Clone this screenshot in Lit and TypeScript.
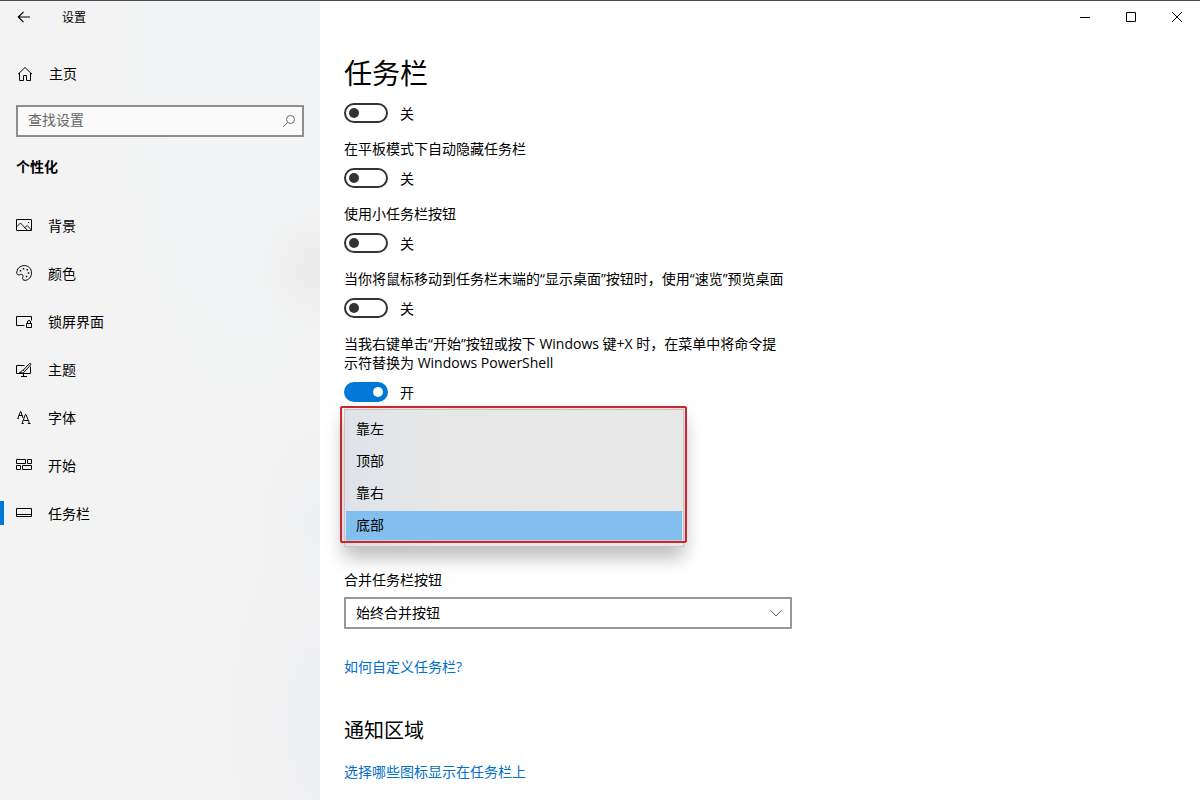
import { LitElement, html, css, svg } from "lit";
import { customElement, state } from "lit/decorators.js";
import { classMap } from "lit/directives/class-map.js";

const icons: Record<string, unknown> = {
  background: svg`<path d="M.5 2.500h15v11H.5z"/><path d="M1 9.500l3.500-3.500 6.500 7M8.500 10.800l2.800-2.300 4.200 4.500" stroke-width=".9"/><path d="M12 5.500h1"/>`,
  colors: svg`<path d="M.8 8.300C.6 3.800 4 .6 8.300.6c4.200 0 7.200 3 7.200 7.200 0 4.400-3 7.500-6.500 7.500-2 0-2.600-1.200-2.300-2.600.4-1.700.5-2.900-.7-3.300-1.100-.4-1.900.5-2.900.5-1.300 0-2.200-.6-2.300-1.600z"/><path d="M3.700 5.700h1.500M6.800 3.700h1.500M10.500 4.700h1.500M11.800 8h1.500M9.800 11.500h1.500" stroke-width="1.500"/>`,
  lock: svg`<path d="M8.500 12.500H.5v-9h15v4M10.500 10.500h5v4h-5zM11.500 10.500V9a1.500 1.500 0 0 1 3 0v1.500"/>`,
  themes: svg`<path d="M8.500 4.500h-8v8h14v-7M5 15.500h6M7.500 13v2.500"/><path d="M7.200 9.200l6.200-6.500c.9-.8 2 .2 1.200 1.200L8.600 10.500zM7.200 9.200c-1.700-.1-1.800 1.900-3.700 2.200 1.800.8 4.500.7 5.100-.9"/>`,
  fonts: svg`<path d="M2 9L4.500 2.500h.3L7 9M2.800 6.500h3.600M1.300 9.500h1.500M6.300 14L9.300 5.500h.7l3.300 8.500M7.500 11.500h4.600M5.500 14.500h2.200M11.800 14.500h2.700"/>`,
  start: svg`<path d="M.5 2.500h9v4h-9zM11.500 2.500h4v4h-4zM.5 8.500h4v4h-4zM6.500 8.500h9v4h-9z"/>`,
  taskbar: svg`<path d="M.5 3.500h15v8H.5zM.5 9.500h15"/>`,
};

const navItems = [
  { icon: "background", label: "背景" },
  { icon: "colors", label: "颜色" },
  { icon: "lock", label: "锁屏界面" },
  { icon: "themes", label: "主题" },
  { icon: "fonts", label: "字体" },
  { icon: "start", label: "开始" },
  { icon: "taskbar", label: "任务栏" },
];

@customElement("app-root")
export class AppRoot extends LitElement {
  @state() private active = "taskbar";

  @state() private toggles = [
    { label: "", on: false },
    { label: "在平板模式下自动隐藏任务栏", on: false },
    { label: "使用小任务栏按钮", on: false },
    { label: "当你将鼠标移动到任务栏末端的“显示桌面”按钮时，使用“速览”预览桌面", on: false },
    { label: "当我右键单击“开始”按钮或按下 Windows 键+X 时，在菜单中将命令提示符替换为 Windows PowerShell", on: true },
  ];

  static styles = css`
    :host {
      display: block;
      font: 14px/20px "Open Sans", "Noto Sans CJK SC", sans-serif;
      color: #000;
    }
    * { box-sizing: border-box; }
    button, input, select { font: inherit; color: inherit; }
    svg {
      display: block;
      flex: none;
      fill: none;
      stroke: currentColor;
    }
    .window {
      display: flex;
      min-height: 100vh;
      background: #fff;
      border-top: 1px solid #4a494b;
    }
    .sidebar {
      flex: none;
      width: 320px;
      background:
        radial-gradient(circle at 320px 268px, #eae9e8 0, #eae9e800 60px),
        radial-gradient(ellipse at 320px 520px, #eeeff1 0, #eeeff100 60px),
        radial-gradient(ellipse at 320px 720px, #edeef0 0, #edeef000 90px),
        radial-gradient(ellipse at 240px 0, #f2f4f6 0, #f2f4f600 170px),
        #f3f3f3;
    }
    .titlebar {
      display: flex;
      align-items: center;
      height: 32px;
      font-size: 12px;
    }
    .titlebar-text { padding-top: 2px; }
    .back, .control {
      display: grid;
      place-items: center;
      height: 32px;
      padding: 0;
      border: 0;
      background: none;
    }
    .back { width: 48px; margin-right: 14px; }
    .control { width: 46px; }
    .home {
      display: flex;
      align-items: center;
      gap: 16px;
      height: 40px;
      margin-top: 21px;
      padding-left: 17px;
      color: inherit;
      text-decoration: none;
    }
    .search {
      display: flex;
      align-items: center;
      height: 32px;
      margin: 11px 16px 0;
      padding: 0 6px 0 10px;
      border: 2px solid #8e8e8e;
      background: #fafafa;
      color: #666;
    }
    .search-input {
      flex: 1;
      min-width: 0;
      padding: 0 0 2px;
      border: 0;
      outline: 0;
      background: none;
    }
    .search-input::placeholder { color: #666; opacity: 1; }
    .category {
      margin: 20px 16px 24px;
      font-size: 14px;
      line-height: 20px;
      font-weight: 700;
    }
    .nav { display: flex; flex-direction: column; }
    .nav-item {
      display: flex;
      align-items: center;
      height: 48px;
      color: inherit;
      text-decoration: none;
    }
    .nav-item::before {
      content: "";
      width: 4px;
      height: 24px;
      margin-right: 12px;
    }
    .nav-item.active::before { background: #0078d7; }
    .nav-label { margin-left: 16px; padding-top: 2px; }

    .main { flex: 1; min-width: 0; }
    .controls { display: flex; justify-content: flex-end; }
    .content { max-width: 496px; padding: 0 24px 16px; }
    .title {
      margin: 20px 0 10px;
      font-size: 28px;
      line-height: 40px;
      font-weight: 400;
    }
    .settings { display: flex; flex-direction: column; gap: 16px; }
    .setting { display: flex; flex-direction: column; gap: 10px; }
    .setting-label { max-width: 444px; line-height: 19px; }
    .toggle-row { display: flex; align-items: center; gap: 12px; height: 20px; }
    .toggle-state { padding-top: 2px; }
    .toggle {
      appearance: none;
      flex: none;
      width: 44px;
      height: 20px;
      margin: 0;
      padding: 3px;
      border: 2px solid #333;
      border-radius: 10px;
    }
    .toggle::before {
      content: "";
      display: block;
      width: 10px;
      height: 10px;
      border-radius: 50%;
      background: #333;
    }
    .toggle:checked { border-color: #0078d7; background: #0078d7; }
    .toggle:checked::before { margin-left: auto; background: #fff; }

    .position { position: relative; height: 168px; }
    .popup {
      position: absolute;
      top: 7px;
      left: 0;
      width: 340px;
      border: 1px solid #c6c6c8;
      padding: 5px 1px 3px;
      background: linear-gradient(90deg, #dfe3e9, #e7e7e7 28%, #e8e8e8);
      box-shadow: 0 10px 18px rgba(0, 0, 0, 0.28);
    }
    .options {
      appearance: none;
      display: block;
      width: 100%;
      height: 128px;
      padding: 0;
      border: 0;
      outline: 0;
      background: none;
      overflow: hidden;
    }
    .option { height: 32px; padding: 3px 10px 0; }
    .option:checked {
      color: #000;
      background: linear-gradient(#82beee, #82beee);
    }
    .marker {
      position: absolute;
      inset: -4px -4px 3px -5px;
      border: 2px solid #c8282f;
      border-radius: 2px;
      box-shadow: inset 0 0 0 1px rgba(255, 205, 205, 0.6);
      pointer-events: none;
    }
    .combo-label { display: block; margin-bottom: 7px; }
    .combo { display: grid; align-items: center; }
    .combo > * { grid-area: 1 / 1; }
    .combo-select {
      appearance: none;
      width: 100%;
      height: 32px;
      padding: 0 34px 0 10px;
      border: 2px solid #999;
      border-radius: 0;
      background: #fff;
    }
    .chevron { justify-self: end; margin-right: 9px; color: #666; pointer-events: none; }
    .link { display: block; width: fit-content; color: #0070c9; text-decoration: none; }
    .help { margin-top: 28px; }
    .section {
      margin: 40px 0 17px;
      font-size: 20px;
      line-height: 28px;
      font-weight: 400;
    }
  `;

  private flip(index: number) {
    this.toggles = this.toggles.map((t, i) => (i === index ? { ...t, on: !t.on } : t));
  }

  private renderToggle(item: { label: string; on: boolean }, index: number) {
    const id = `toggle-${index}`;
    return html`
      <div class="setting">
        ${item.label ? html`<label class="setting-label" for=${id}>${item.label}</label>` : ""}
        <div class="toggle-row">
          <input class="toggle" type="checkbox" role="switch" id=${id} .checked=${item.on} @change=${() => this.flip(index)} />
          <label class="toggle-state" for=${id}>${item.on ? "开" : "关"}</label>
        </div>
      </div>
    `;
  }

  render() {
    return html`
      <div class="window">
        <aside class="sidebar">
          <header class="titlebar">
            <button class="back" type="button" aria-label="返回">
              <svg width="14" height="12" viewBox="0 0 14 12"><path d="M13 6H1.500M6.500.8L1.300 6l5.200 5.200" stroke-width="1.200" /></svg>
            </button>
            <span class="titlebar-text">设置</span>
          </header>
          <a class="home" href="#">
            <svg width="16" height="16" viewBox="0 0 16 16"><path d="M1 8.200L8 1.500l7 6.700M2.500 7v7.500h4v-5h3v5h4V7" /></svg>
            <span>主页</span>
          </a>
          <label class="search">
            <input class="search-input" type="text" placeholder="查找设置" />
            <svg width="14" height="14" viewBox="0 0 14 14"><circle cx="8.500" cy="5.500" r="4" /><path d="M5.600 8.400L1 13" /></svg>
          </label>
          <h2 class="category">个性化</h2>
          <nav class="nav">
            ${navItems.map(
              (item) => html`
                <a
                  class=${classMap({ "nav-item": true, active: item.icon === this.active })}
                  href="#"
                  @click=${() => (this.active = item.icon)}
                >
                  <svg width="16" height="16" viewBox="0 0 16 16">${icons[item.icon]}</svg>
                  <span class="nav-label">${item.label}</span>
                </a>
              `
            )}
          </nav>
        </aside>

        <main class="main">
          <div class="controls">
            <button class="control" type="button" aria-label="最小化">
              <svg width="10" height="10" viewBox="0 0 10 10"><path d="M0 5.500h10" /></svg>
            </button>
            <button class="control" type="button" aria-label="最大化">
              <svg width="10" height="10" viewBox="0 0 10 10"><path d="M.5.5h9v9h-9z" /></svg>
            </button>
            <button class="control" type="button" aria-label="关闭">
              <svg width="10" height="10" viewBox="0 0 10 10"><path d="M0 0l10 10M10 0L0 10" /></svg>
            </button>
          </div>
          <div class="content">
            <h1 class="title">任务栏</h1>
            <div class="settings">${this.toggles.map((t, i) => this.renderToggle(t, i))}</div>

            <div class="position">
              <div class="popup">
                <select class="options" size="4" aria-label="任务栏在屏幕上的位置">
                  <option class="option">靠左</option>
                  <option class="option">顶部</option>
                  <option class="option">靠右</option>
                  <option class="option" selected>底部</option>
                </select>
                <div class="marker"></div>
              </div>
            </div>

            <label class="combo-label" for="combine">合并任务栏按钮</label>
            <div class="combo">
              <select class="combo-select" id="combine">
                <option>始终合并按钮</option>
              </select>
              <svg class="chevron" width="14" height="8" viewBox="0 0 14 8"><path d="M1 1l6 6 6-6" /></svg>
            </div>
            <a class="link help" href="#">如何自定义任务栏?</a>
            <h2 class="section">通知区域</h2>
            <a class="link" href="#">选择哪些图标显示在任务栏上</a>
          </div>
        </main>
      </div>
    `;
  }
}
